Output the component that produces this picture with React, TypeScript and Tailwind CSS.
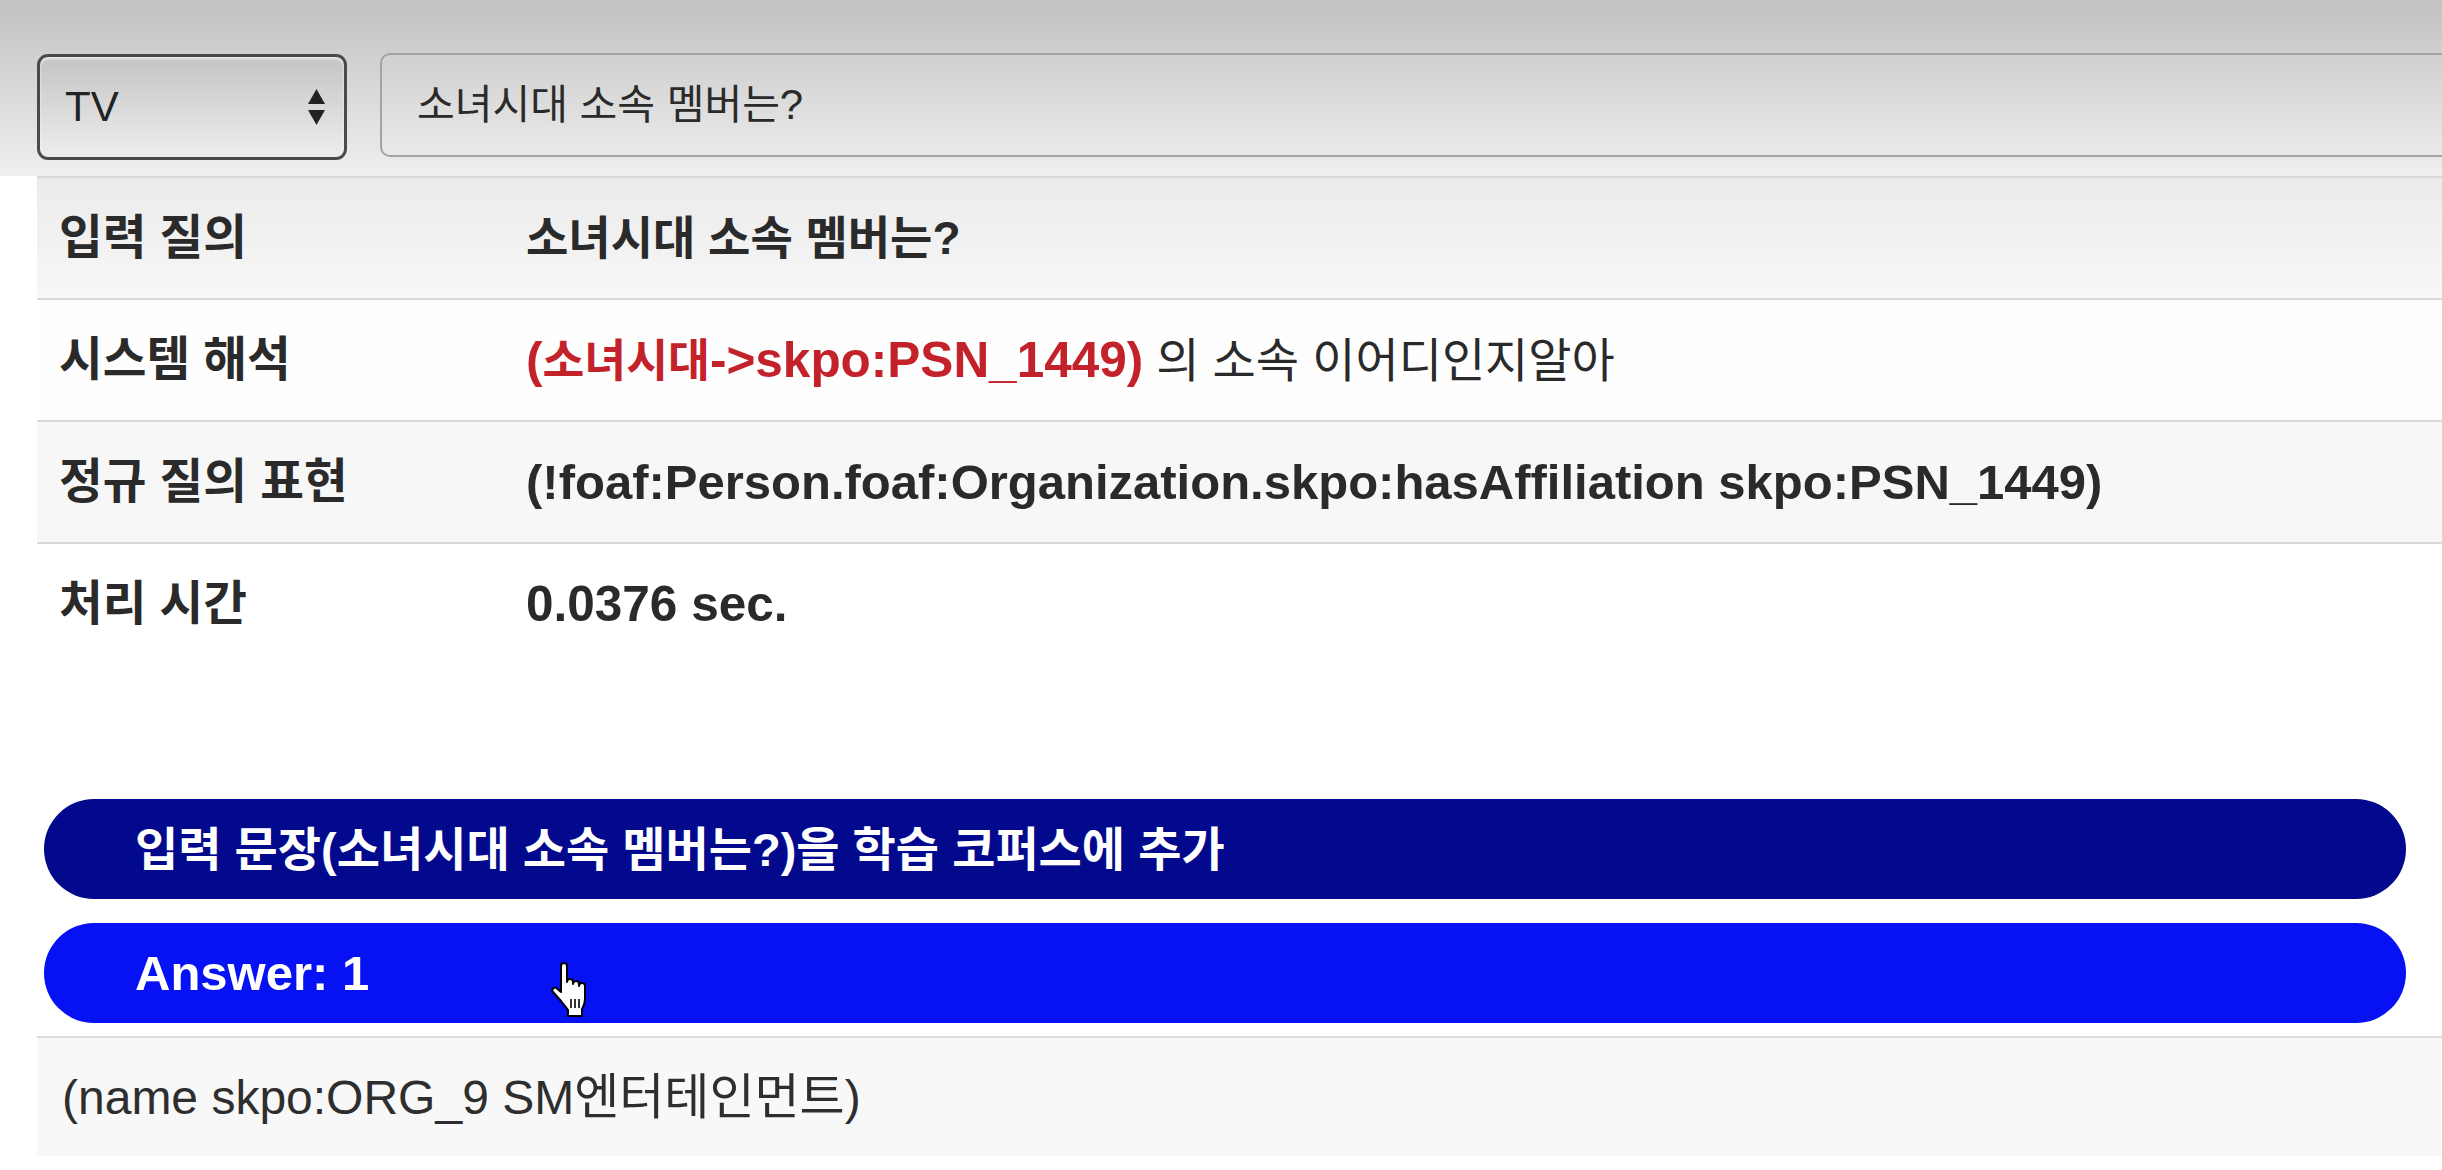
import React from "react";

function HandCursor() {
  return (
    <svg
      width="40"
      height="58"
      viewBox="0 0 20 29"
      className="absolute left-[505px] top-[38px]"
    >
      <path
        d="M6 2.5 A1.5 1.5 0 0 1 9 2.5 V10.5 A1.5 1.5 0 0 1 12 10.5 V11.5 A1.5 1.5 0 0 1 15 11.5 V12.5 A1.5 1.5 0 0 1 18 12.5 V19 C18 21.5 17 23 16.5 24 V27.5 H9.5 V24.5 C8.5 23 7.5 22 6 20 L2 15.5 A1.3 1.3 0 0 1 4 13.8 L6 15.5 Z"
        fill="white"
        stroke="black"
        strokeWidth="1"
        strokeLinejoin="round"
      />
      <path d="M11 19 V23.5 M13 19 V23.5 M15 19 V23.5" stroke="black" strokeWidth="0.8" />
    </svg>
  );
}

function Row({
  bg,
  label,
  children,
}: {
  bg: string;
  label: string;
  children: React.ReactNode;
}) {
  return (
    <div className={"flex items-center h-[122px] border-t-2 border-[#d9d9d9] " + bg}>
      <div className="w-[489px] shrink-0 pl-[22px] text-[47.5px] font-bold leading-none whitespace-nowrap">{label}</div>
      <div className="font-bold leading-none whitespace-nowrap">{children}</div>
    </div>
  );
}

export default function App() {
  return (
    <div className="w-[2442px] h-[1170px] overflow-hidden bg-white text-[#2a2a2a] font-['Liberation_Sans','Noto_Sans_CJK_KR',sans-serif]">
      {/* header with select + input */}
      <div className="h-[176px] bg-linear-to-b from-[#c2c2c2] to-[#efefef] flex items-start pt-[54px] pl-[37px]">
        <div className="w-[310px] h-[106px] shrink-0 rounded-[11px] border-[3px] border-[#4a4a4a] bg-linear-to-b from-[#c4c4c4] to-[#eeeeee] flex items-center justify-between pl-[25px] pr-[19px] shadow-[inset_0_2px_3px_rgba(255,255,255,0.7)]">
          <span className="text-[42px] text-[#222] leading-none">TV</span>
          <svg width="17" height="36" viewBox="0 0 17 36">
            <path d="M8.5 0 L17 15 H0 Z" fill="#222" />
            <path d="M0 21 H17 L8.5 36 Z" fill="#222" />
          </svg>
        </div>
        <div className="ml-[33px] -mt-px flex-1 mr-[-40px] h-[104px] rounded-l-[10px] border-2 border-[#a3a3a3] flex items-center pl-[35px] whitespace-nowrap leading-none text-[42px] text-[#2a2a2a]">
          <span>
            <span className="text-[41px]">소녀시대</span> <span className="text-[41px]">소속</span>{" "}
            <span className="text-[41px]">멤버는</span>?
          </span>
        </div>
      </div>

      {/* result table */}
      <div className="ml-[37px]">
        <Row bg="bg-linear-to-b from-[#ebebeb] to-[#f7f7f7]" label="입력 질의">
          <span className="text-[46px]">소녀시대 소속 멤버는?</span>
        </Row>
        <Row bg="bg-[#fefefe]" label="시스템 해석">
          <span className="text-[#c4222a]">
            <span className="text-[49.5px]">(</span>
            <span className="text-[45.5px]">소녀시대</span>
            <span className="text-[49.5px]">-&gt;skpo:PSN_1449)</span>
          </span>
          <span className="text-[47px] font-normal"> 의 소속 이어디인지알아</span>
        </Row>
        <Row bg="bg-[#f7f7f7]" label="정규 질의 표현">
          <span className="text-[49px]">(!foaf:Person.foaf:Organization.skpo:hasAffiliation skpo:PSN_1449)</span>
        </Row>
        <Row bg="bg-white" label="처리 시간">
          <span className="text-[49.5px]">0.0376 sec.</span>
        </Row>
      </div>

      {/* action bars */}
      <div className="mt-[135px] ml-[44px] w-[2362px] flex flex-col gap-[24px]">
        <div className="h-[100px] rounded-full bg-[#03098d] flex items-center pl-[91px] text-white font-bold text-[47px] leading-none whitespace-nowrap">
          입력 문장(소녀시대 소속 멤버는?)을 학습 코퍼스에 추가
        </div>
        <div className="relative h-[100px] rounded-full bg-[#0612f4] flex items-center pl-[91px] text-white font-bold text-[49px] leading-none whitespace-nowrap">
          Answer: 1
          <HandCursor />
        </div>
      </div>

      {/* answer list */}
      <div className="mt-[13px] ml-[37px] h-[120px] border-t-2 border-[#dcdcdc] bg-[#f8f8f8] flex items-center pl-[25px] leading-none whitespace-nowrap text-[#2e2e2e]">
        <span className="text-[48px]">
          (name skpo:ORG_9 SM<span className="text-[49px]">엔터테인먼트</span>)
        </span>
      </div>
    </div>
  );
}
